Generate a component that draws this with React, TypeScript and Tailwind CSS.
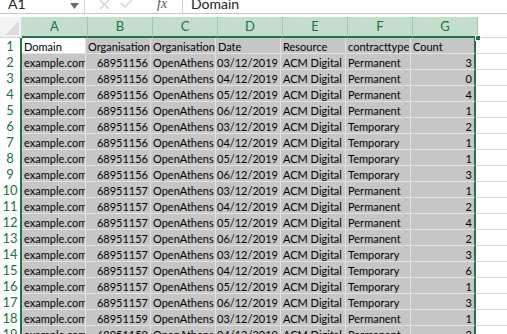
const COLS = ["A", "B", "C", "D", "E", "F", "G"];
const WIDTHS = [66, 65, 65, 65, 65, 65, 65];

type Row = [string, string, string, string, string, string, string];

const ROWS: Row[] = [
  ["Domain", "Organisation", "Organisation", "Date", "Resource", "contracttype", "Count"],
  ["example.com", "68951156", "OpenAthens", "03/12/2019", "ACM Digital", "Permanent", "3"],
  ["example.com", "68951156", "OpenAthens", "04/12/2019", "ACM Digital", "Permanent", "0"],
  ["example.com", "68951156", "OpenAthens", "05/12/2019", "ACM Digital", "Permanent", "4"],
  ["example.com", "68951156", "OpenAthens", "06/12/2019", "ACM Digital", "Permanent", "1"],
  ["example.com", "68951156", "OpenAthens", "03/12/2019", "ACM Digital", "Temporary", "2"],
  ["example.com", "68951156", "OpenAthens", "04/12/2019", "ACM Digital", "Temporary", "1"],
  ["example.com", "68951156", "OpenAthens", "05/12/2019", "ACM Digital", "Temporary", "1"],
  ["example.com", "68951156", "OpenAthens", "06/12/2019", "ACM Digital", "Temporary", "3"],
  ["example.com", "68951157", "OpenAthens", "03/12/2019", "ACM Digital", "Permanent", "1"],
  ["example.com", "68951157", "OpenAthens", "04/12/2019", "ACM Digital", "Permanent", "2"],
  ["example.com", "68951157", "OpenAthens", "05/12/2019", "ACM Digital", "Permanent", "4"],
  ["example.com", "68951157", "OpenAthens", "06/12/2019", "ACM Digital", "Permanent", "2"],
  ["example.com", "68951157", "OpenAthens", "03/12/2019", "ACM Digital", "Temporary", "3"],
  ["example.com", "68951157", "OpenAthens", "04/12/2019", "ACM Digital", "Temporary", "6"],
  ["example.com", "68951157", "OpenAthens", "05/12/2019", "ACM Digital", "Temporary", "1"],
  ["example.com", "68951157", "OpenAthens", "06/12/2019", "ACM Digital", "Temporary", "3"],
  ["example.com", "68951159", "OpenAthens", "03/12/2019", "ACM Digital", "Permanent", "1"],
  ["example.com", "68951159", "OpenAthens", "04/12/2019", "ACM Digital", "Permanent", "2"],
];

const RIGHT_ALIGNED = new Set([1, 3, 6]);

function FormulaBar() {
  return (
    <div className="flex h-[14px] items-end overflow-hidden border-b border-[#c8c8c8] bg-white text-[14px] leading-none text-[#222]">
      <div className="relative h-full w-[85px] border-r border-[#d4d4d4] pl-[8px]">
        <span className="absolute left-[8px] top-[-3px]">A1</span>
        <svg className="absolute right-[5px] top-[3px]" width="9" height="6" viewBox="0 0 9 6">
          <path d="M0 0 L9 0 L4.5 6 Z" fill="#6b6b6b" />
        </svg>
      </div>
      <div className="flex h-full w-[56px] items-start gap-[10px] pl-[14px]">
        <svg width="11" height="10" viewBox="0 0 11 10">
          <path d="M1 0 L10 9 M10 0 L1 9" stroke="#d0d0d0" strokeWidth="1.4" />
        </svg>
        <svg width="13" height="10" viewBox="0 0 13 10">
          <path d="M1 3 L5 7 L12 0" stroke="#d0d0d0" strokeWidth="1.4" fill="none" />
        </svg>
      </div>
      <div className="relative h-full w-[42px] border-r border-[#d4d4d4] font-['Liberation_Serif',serif] italic text-[#555]">
        <span className="absolute left-[16px] top-[-3px]">fx</span>
      </div>
      <div className="relative h-full flex-1">
        <span className="absolute left-[8px] top-[-3px]">Domain</span>
      </div>
    </div>
  );
}

function HeaderRow() {
  return (
    <div className="flex h-[21px]">
      <div className="relative w-[22px] shrink-0 border-b border-r border-[#d6d6d6] bg-[#f3f3f3]">
        <svg className="absolute bottom-[2px] right-[2px]" width="14" height="14" viewBox="0 0 14 14">
          <path d="M14 0 L14 14 L0 14 Z" fill="#dcdcdc" />
        </svg>
      </div>
      {COLS.map((c, i) => (
        <div
          key={c}
          style={{ width: WIDTHS[i] }}
          className="flex shrink-0 items-center justify-center border-b-2 border-r border-b-[#217346] border-r-[#9fc9ab] bg-[#c3dfcb] text-[13px] text-[#217346]"
        >
          {c}
        </div>
      ))}
      <div className="flex-1 border-b border-[#d6d6d6] bg-white" />
    </div>
  );
}

function DataRow({ n, row }: { n: number; row: Row }) {
  return (
    <div className="flex h-[16px] shrink-0">
      <div className="flex w-[22px] shrink-0 items-center justify-center border-r-2 border-[#217346] bg-white pt-[1px] text-[13px] leading-none text-[#217346]">
        {n}
      </div>
      {row.map((v, i) => {
        const active = n === 1 && i === 0;
        return (
          <div
            key={i}
            style={{ width: i === 0 ? WIDTHS[i] - 2 : WIDTHS[i] }}
            className={`flex shrink-0 items-center overflow-hidden whitespace-nowrap border-b border-r border-[#e2e2e2] px-[2px] pt-[2px] text-[11px] leading-none text-black ${
              active ? "bg-white" : "bg-[#c6c6c6]"
            } ${RIGHT_ALIGNED.has(i) && n > 1 ? "justify-end" : ""} ${i === 6 ? "border-r-2 border-r-[#217346]" : ""}`}
          >
            {v}
          </div>
        );
      })}
      <div className="flex-1 border-b border-[#dcdcdc] bg-white" />
    </div>
  );
}

export default function App() {
  return (
    <div className="h-[334px] w-[507px] overflow-hidden bg-white font-['Lato',sans-serif]">
      <FormulaBar />
      <div className="h-[3px] bg-white" />
      <div className="relative">
        <HeaderRow />
        <div className="flex flex-col">
          {ROWS.map((r, i) => (
            <DataRow key={i} n={i + 1} row={r} />
          ))}
        </div>
        <div className="absolute left-[475px] top-[18px] h-[6px] w-[6px] border border-white bg-[#217346]" />
      </div>
    </div>
  );
}
